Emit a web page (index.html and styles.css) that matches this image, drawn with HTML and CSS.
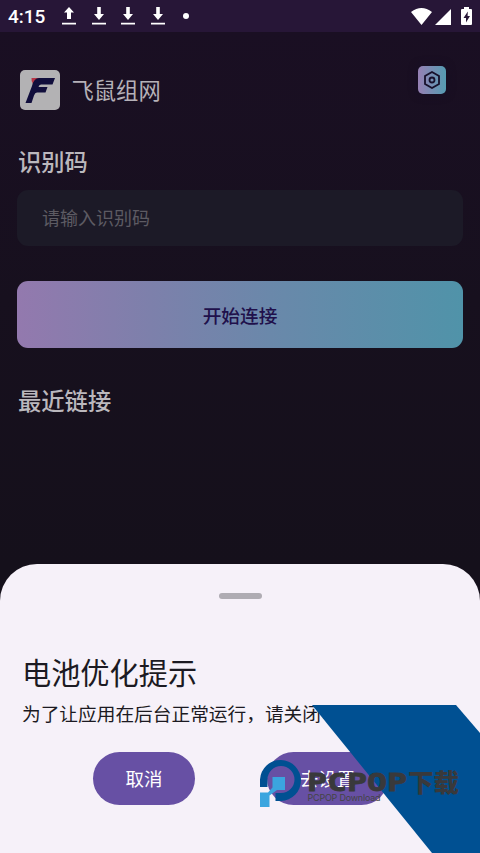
FILE: index.html
```html
<!DOCTYPE html>
<html lang="zh-CN">
<head>
<meta charset="utf-8">
<meta name="viewport" content="width=device-width, initial-scale=1">
<title>飞鼠组网</title>
<link rel="stylesheet" href="styles.css">
</head>
<body>
<div class="screen">
  <header class="status">
    <span class="time">4:15</span>
    <div class="transfers">
      <svg width="14" height="18" viewBox="0 0 14 18"><path d="M7 0l5 5.500H9V12H5V5.500H2zM0 15.800h14v1.700H0z"/></svg>
      <svg width="14" height="18" viewBox="0 0 14 18"><path d="M5.200 0h3.600v7H12l-5 6-5-6h3.200zM0 15.800h14v1.700H0z"/></svg>
      <svg width="14" height="18" viewBox="0 0 14 18"><path d="M5.200 0h3.600v7H12l-5 6-5-6h3.200zM0 15.800h14v1.700H0z"/></svg>
      <svg width="14" height="18" viewBox="0 0 14 18"><path d="M5.200 0h3.600v7H12l-5 6-5-6h3.200zM0 15.800h14v1.700H0z"/></svg>
    </div>
    <i class="dot"></i>
    <svg class="system" width="62" height="19" viewBox="0 0 62 19"><path d="M0 5Q10.500-3 21 5L10.500 18zM24 18L40 2v16zM50 3q0-1 1-1h2V0h5v2h2q1 0 1 1v14q0 1-1 1h-9q-1 0-1-1z"/><path class="bolt" d="M56.800 4.500L52.500 11h2.500v4.500l4-6.500h-2.400z"/></svg>
  </header>
  <main class="content">
    <div class="brand">
      <svg class="logo" width="40" height="40" viewBox="0 0 40 40"><rect width="40" height="40" rx="5" fill="#b3b2b4"/><path d="M11.500 8H20l-4 6h-3q-2-4-1.500-6z" fill="#b73747"/><path d="M19 8h16l-2.500 6.500H21q-2 0-2.500 2.500h9l-2 5.500H17q-2 0-3 3L11.500 33H5.500L12 16Q14 8 19 8z" fill="#110e3c"/></svg>
      <span class="brand-name">飞鼠组网</span>
      <span class="settings"><svg width="18" height="18" viewBox="0 0 18 18"><path d="M9 1l7 4v8l-7 4-7-4V5z"/><circle cx="9" cy="9" r="2.500"/></svg></span>
    </div>
    <h2 class="label">识别码</h2>
    <div class="field">请输入识别码</div>
    <div class="connect">开始连接</div>
    <h2 class="label recent">最近链接</h2>
  </main>
  <section class="sheet">
    <div class="handle"></div>
    <h1 class="title">电池优化提示</h1>
    <p class="message">为了让应用在后台正常运行，请关闭电池优化。</p>
    <div class="actions"><span class="pill">取消</span><span class="pill wide">去设置</span></div>
  </section>
  <svg class="watermark" width="240" height="153" viewBox="240 700 240 153">
    <path d="M312 705H456L480 733V853H432z" fill="#005092"/>
    <path d="M260 787V779.500A20.500 20.500 0 1 1 281 801H275.500V793H281A13.500 13.500 0 1 0 267.500 779.500V787z" fill="#005092"/>
    <path d="M272.500 777H285V790H277L269.500 795.500V807H260V792.500H268L272.500 787.500z" fill="#3ba5df"/>
    <text class="wordmark" x="307" y="791" textLength="100" lengthAdjust="spacingAndGlyphs">PCPOP</text>
    <text class="wordmark-cn" x="408" y="792" textLength="51" lengthAdjust="spacingAndGlyphs">下载</text>
    <text class="subtitle" x="307.500" y="801" textLength="73" lengthAdjust="spacing">PCPOP Download</text>
  </svg>
</div>
</body>
</html>
```
FILE: styles.css
```css
* { box-sizing: border-box; }
body { margin: 0; font-family: "Noto Sans CJK SC", sans-serif; }
svg { display: block; }
.screen {
  position: relative;
  display: flex;
  flex-direction: column;
  width: 480px;
  height: 853px;
  overflow: hidden;
  background: linear-gradient(#1a0f23 32px, #17101e 300px, #15101b 565px);
}
.status {
  display: flex;
  align-items: center;
  height: 32px;
  padding: 0 7px 0 8px;
  background: #271637;
  color: #fff;
}
.time { width: 54px; font: 500 19px/33px Roboto, sans-serif; }
.transfers { display: flex; gap: 15.500px; }
.transfers svg, .system { fill: #fff; }
.dot { width: 6px; height: 6px; margin-left: 18.500px; border-radius: 50%; background: #fff; }
.system { margin-left: auto; }
.system .bolt { fill: #271637; }
.content { height: 532px; padding: 32px 17px 0; }
.brand { display: flex; height: 52px; padding-left: 3px; align-items: flex-start; }
.logo { margin-top: 6.400px; }
.brand-name { margin: 8px 0 0 11.500px; font-size: 22.300px; line-height: 34px; color: #b5b1b8; }
.settings {
  display: flex;
  align-items: center;
  justify-content: center;
  width: 28px;
  height: 28px;
  margin: 2px 17px 0 auto;
  border-radius: 5px;
  background: linear-gradient(90deg, #9680b4, #559cb2);
  box-shadow: 0 0 7px 2px #170f24;
}
.settings svg { fill: none; stroke: #17102b; stroke-width: 1.800; }
.label { margin: 28px 0 0 1px; font-size: 23.300px; font-weight: 500; line-height: 34px; color: #bbb8bd; }
.field {
  height: 56px;
  margin-top: 12px;
  padding-left: 25px;
  border-radius: 11px;
  background: #1c1a27;
  font-size: 18px;
  line-height: 55px;
  color: #5d5b63;
}
.connect {
  height: 67px;
  margin-top: 35px;
  border-radius: 11px;
  background: linear-gradient(90deg, #9379ae, #7d80ab 30%, #6889aa 60%, #5093a9);
  text-align: center;
  font-size: 18.700px;
  font-weight: 500;
  line-height: 67px;
  color: #20104b;
}
.recent { margin-top: 35px; }
.sheet {
  display: flex;
  flex-direction: column;
  height: 289px;
  padding: 29px 22px 0;
  border-radius: 37px 37px 0 0;
  background: #f6f1f9;
  color: #1c1a22;
}
.handle { width: 43px; height: 6px; margin: 0 auto; border-radius: 3px; background: #afacb3; }
.title { margin: 51px 0 0; font-size: 29.200px; font-weight: 400; line-height: 42px; }
.message { margin: 7px 0 0; font-size: 18.700px; line-height: 28px; white-space: nowrap; }
.actions { display: flex; gap: 72px; margin: 25px 0 0 71px; }
.pill {
  width: 102px;
  height: 53px;
  border-radius: 27px;
  background: #6750a4;
  color: #fff;
  text-align: center;
  font-size: 18.500px;
  line-height: 53px;
}
.wide { width: 121px; }
.watermark { position: absolute; right: 0; bottom: 0; }
.wordmark { font: 700 24px "DejaVu Sans Mono", monospace; fill: #39393b; stroke: #39393b; stroke-width: .8px; }
.wordmark-cn { font: 900 25px "Noto Sans CJK SC", sans-serif; fill: #39393b; }
.subtitle { font: 9px Inter, sans-serif; fill: #444; }
```
